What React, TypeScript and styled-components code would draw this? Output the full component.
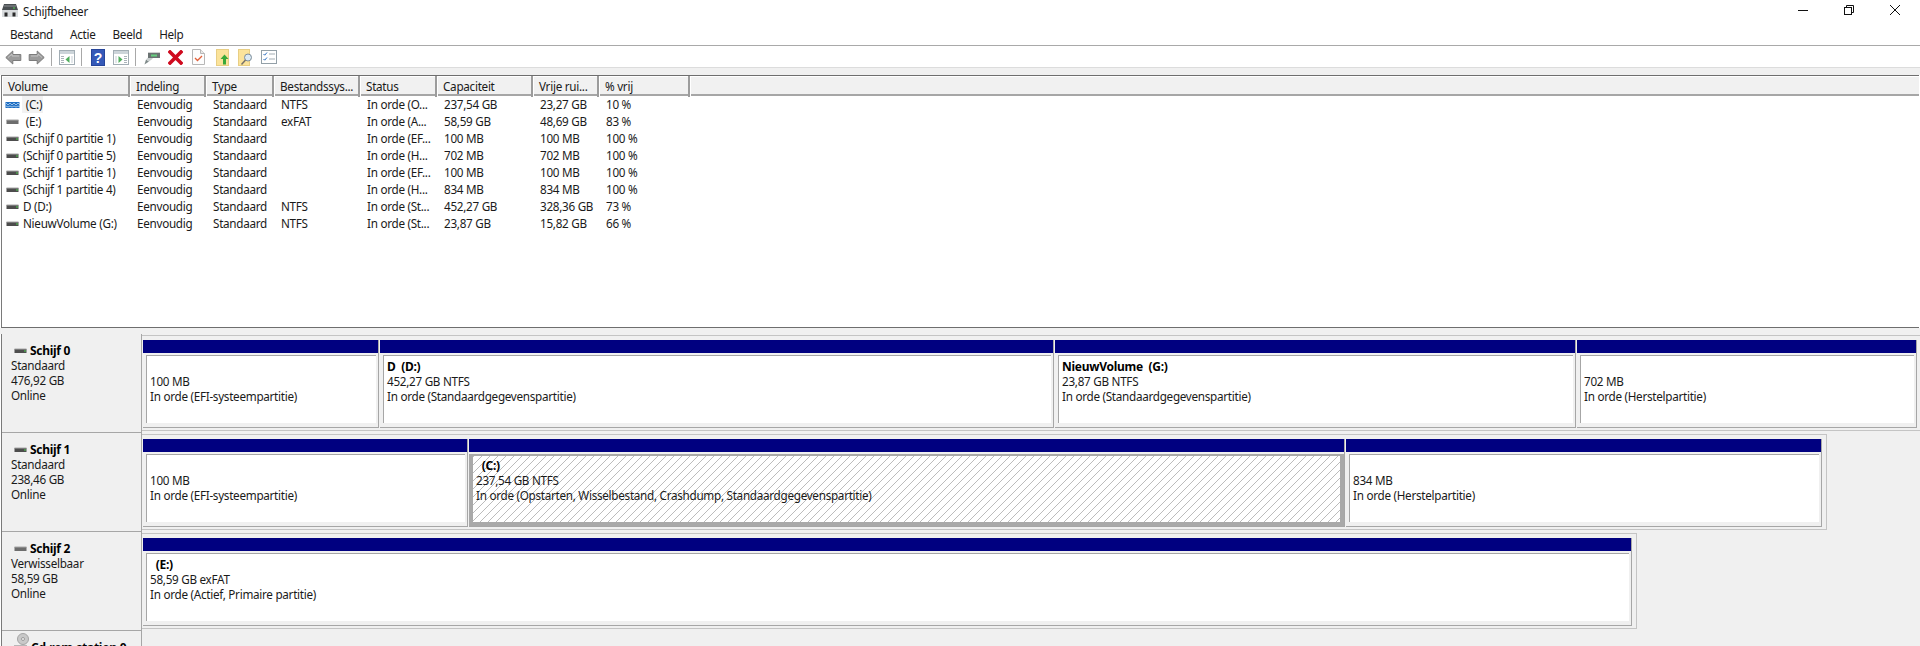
import React from 'react';
import styled, { createGlobalStyle } from 'styled-components';

const GlobalStyle = createGlobalStyle`
  html, body {
    margin: 0;
    padding: 0;
    background: #ffffff;
  }
  body {
    font-family: 'Noto Sans', 'Open Sans', sans-serif;
    font-size: 11.7px;
    letter-spacing: -0.28px;
    color: #1a1a1a;
  }
`;

const Page = styled.div`
  height: 100vh;
  overflow: hidden;
  display: flex;
  flex-direction: column;
  background: #ffffff;
`;

const TitleBar = styled.div`
  height: 24px;
  flex: none;
  display: flex;
  align-items: flex-start;
  padding-left: 2px;
`;

const TitleIcon = styled.svg`
  width: 16px;
  height: 15px;
  margin-top: 4px;
`;

const TitleText = styled.span`
  margin-left: 5px;
  line-height: 23px;
`;

const WindowControls = styled.div`
  margin-left: auto;
  padding-right: 2px;
  display: flex;
`;

const WindowButton = styled.div`
  width: 46px;
  height: 20px;
  display: flex;
  align-items: center;
  justify-content: center;
`;

const MenuBar = styled.div`
  height: 21px;
  flex: none;
  display: flex;
  padding-left: 3px;
  border-bottom: 1px solid #a9a9a9;
`;

const MenuItem = styled.span`
  line-height: 21px;
  padding: 0 7px;
  margin-right: 3px;
`;

const Toolbar = styled.div`
  height: 22px;
  flex: none;
  box-sizing: border-box;
  display: flex;
  align-items: center;
  padding: 1px 0 0 1.5px;
  border-bottom: 1px solid #dcdcdc;
`;

const Tool = styled.div`
  width: 23.3px;
  height: 20px;
  flex: none;
  display: flex;
  align-items: center;
  justify-content: center;
`;

const ToolSeparator = styled.div`
  width: 1px;
  height: 18px;
  flex: none;
  margin: 0 4px 0 2.5px;
  background: #a8a8a8;
`;

const Gap = styled.div`
  height: 7px;
  flex: none;
  background: #f0f0f0;
`;

const ListPane = styled.div`
  height: 251px;
  flex: none;
  margin-left: 1px;
  margin-right: 1px;
  border-top: 1px solid #6e6e6e;
  border-left: 1px solid #7a7a7a;
  border-bottom: 1px solid #6e6e6e;
  overflow: hidden;
`;

const columns = '128px 76px 68px 86px 77px 96px 66px 91px 1fr';

const HeaderRow = styled.div`
  display: grid;
  grid-template-columns: ${columns};
  height: 18px;
  background: #f1f1f1;
  border-bottom: 2px solid #a6a6a6;
`;

const HeaderCell = styled.div`
  padding-left: 6px;
  line-height: 21px;
  white-space: nowrap;
  border-right: 2px solid #9c9c9c;
  box-shadow: inset 1px 1px 0 #ffffff;
  &:last-child {
    border-right: none;
  }
`;

const Row = styled.div`
  display: grid;
  grid-template-columns: ${columns};
  height: 17px;
  line-height: 17px;
`;

const Cell = styled.div`
  padding-left: 7px;
  white-space: nowrap;
  overflow: hidden;
`;

const VolumeCell = styled.div`
  display: flex;
  align-items: center;
  padding-left: 3px;
  white-space: pre;
`;

const VolumeName = styled.span<{ $selected?: boolean }>`
  margin-left: 2px;
  padding: 0 1px;
  height: 17px;
  background: ${(p) => (p.$selected ? '#f2f2f2' : 'transparent')};
`;

const Splitter = styled.div`
  height: 6px;
  flex: none;
  background: #f0f0f0;
`;

const DiskPane = styled.div`
  flex: 1;
  min-height: 0;
  margin-left: 1px;
  border-left: 1px solid #7a7a7a;
  background: #f0f0f0;
`;

const DiskRow = styled.div`
  display: flex;
  height: 99px;
`;

const DiskLabel = styled.div`
  width: 140px;
  flex: none;
  box-sizing: border-box;
  padding: 9px 0 0 9px;
  line-height: 15px;
  border-right: 1px solid #a6a6a6;
  border-bottom: 1px solid #a6a6a6;
`;

const DiskName = styled.div`
  display: flex;
  align-items: center;
  font-size: 12px;
  font-weight: 700;
  color: #000000;
  margin-left: 2px;
  gap: 2px;
`;

const PartitionList = styled.div`
  align-self: flex-start;
  display: inline-flex;
  margin-top: 1px;
  padding: 4px 3px 2px 1px;
  background: #f0f0f0;
  border: 1px solid #c4c4c4;
  border-left: none;
`;

const Partition = styled.div<{ $w: number }>`
  width: ${(p) => p.$w - 1}px;
  height: 88px;
  flex: none;
  box-sizing: border-box;
  margin-right: 1px;
  border-right: 1px solid #a6a6a6;
  border-bottom: 1px solid #a6a6a6;
`;

const PartitionBar = styled.div`
  height: 13px;
  background: #000080;
`;

const PartitionBody = styled.div`
  height: 68px;
  box-sizing: border-box;
  margin: 2px 2px 0 3px;
  padding: 3px 0 0 3px;
  line-height: 15px;
  background: #ffffff;
  border-top: 1px solid #a6a6a6;
  border-left: 1px solid #a6a6a6;
`;

const SelectedBody = styled.div`
  height: 72px;
  box-sizing: border-box;
  margin-top: 2px;
  padding: 2px 0 0 3px;
  line-height: 15px;
  border: 4px solid #a9a9a9;
  border-top-width: 2px;
  background: repeating-linear-gradient(135deg, #bcbcbc 0 1px, #ffffff 1px 5.66px);
`;

const PartitionName = styled.div`
  min-height: 15px;
  font-size: 12px;
  font-weight: 700;
  color: #000000;
  white-space: pre;
`;

const PartitionText = styled.div`
  white-space: nowrap;
`;

// --- drawings ---

const Drive = ({ kind }: { kind: 'system' | 'plain' | 'removable' }) => (
  <svg width="15" height="8" viewBox="0 0 15 8" style={{ flex: 'none' }}>
    {kind === 'system' ? (
      <>
        <rect x="0.5" y="1" width="14" height="6" fill="#1f6fc4" />
        <path d="M1 2l2 2 2-2 2 2 2-2 2 2 2-2 2 2M1 5l2 1 2-1 2 1 2-1 2 1 2-1 2 1" stroke="#cfe4f7" strokeWidth="0.7" fill="none" />
      </>
    ) : (
      <>
        <rect x="1.5" y="2" width="12" height="4" fill={kind === 'plain' ? '#4d4d4d' : '#6d6d6d'} />
        <rect x="1.5" y="1.5" width="12" height="1" fill="#a8a8a8" />
        {kind === 'plain' && <rect x="11" y="3.5" width="2" height="1" fill="#4fd04f" />}
      </>
    )}
  </svg>
);

const WindowIcon = ({ arrow }: { arrow: 'left' | 'right' }) => (
  <svg width="16" height="15" viewBox="0 0 16 15">
    <rect x="0.5" y="0.5" width="15" height="14" fill="#ffffff" stroke="#a2adb4" />
    <rect x="1" y="1" width="14" height="3" fill="#ccd4d9" />
    {arrow === 'left' ? (
      <>
        <path d="M2 6.500h3M2 8.500h3M2 10.500h3M2 12.500h3" stroke="#aab3b9" />
        <path d="M10.500 6v7l-4-3.500z" fill="#4fae5c" />
        <path d="M12 6h2v7h-2z" fill="#e3e7ea" />
      </>
    ) : (
      <>
        <path d="M11 6.500h3M11 8.500h3M11 10.500h3M11 12.500h3" stroke="#aab3b9" />
        <path d="M5.500 6v7l4-3.500z" fill="#4fae5c" />
        <path d="M2 6h2v7H2z" fill="#e3e7ea" />
      </>
    )}
  </svg>
);

const ArrowIcon = ({ flip }: { flip?: boolean }) => (
  <svg width="17" height="15" viewBox="0 0 17 15" style={flip ? { transform: 'scaleX(-1)' } : undefined}>
    <path d="M0.800 7.500L7.800 1v3.500h8v6h-8V14z" fill="#9b9b9b" stroke="#7b7b7b" />
    <path d="M3 7.500L7 4v2h7" fill="none" stroke="#c4c4c4" />
  </svg>
);

const ToolIcons = {
  help: (
    <svg width="14" height="17" viewBox="0 0 14 17">
      <rect width="14" height="17" fill="#3559b8" />
      <rect x="0.500" y="0.500" width="13" height="16" fill="none" stroke="#27459a" />
      <text x="7" y="13.500" textAnchor="middle" fontSize="14" fontWeight="700" fontFamily="'Liberation Sans', sans-serif" fill="#ffffff">?</text>
    </svg>
  ),
  connect: (
    <svg width="16" height="15" viewBox="0 0 16 15">
      <path d="M0.500 14.500l1.500-5 3 2z" fill="#7f8a8a" />
      <path d="M2 9.500l3-3 4 2-4 3z" fill="#c9cfcf" />
      <rect x="4" y="3" width="12" height="5" fill="#6a7272" />
      <rect x="4" y="2" width="12" height="1" fill="#d0d0d0" />
      <rect x="7" y="4.500" width="6" height="2" fill="#66d07f" />
    </svg>
  ),
  remove: (
    <svg width="15" height="15" viewBox="0 0 15 15">
      <path d="M2 2l11 11M13 2L2 13" stroke="#cf0a1e" strokeWidth="3.600" strokeLinecap="square" />
    </svg>
  ),
  check: (
    <svg width="13" height="16" viewBox="0 0 13 16">
      <path d="M0.500 0.500h8l4 4v11h-12z" fill="#fdfdfd" stroke="#b7b7b7" />
      <path d="M8.500 0.500v4h4" fill="#e8e8e8" stroke="#b7b7b7" />
      <path d="M3 9l2.500 2.500L10 7" fill="none" stroke="#e2603a" strokeWidth="1.300" />
    </svg>
  ),
  folderUp: (
    <svg width="13" height="17" viewBox="0 0 13 17">
      <rect width="12" height="16" x="0.500" y="0.500" fill="#fbe39a" stroke="#e8ce84" />
      <path d="M8.500 5.500l4 4.500h-2.500v5.500h-3V10H4.500z" fill="#39a93a" />
    </svg>
  ),
  folderSearch: (
    <svg width="15" height="17" viewBox="0 0 15 17">
      <rect width="11" height="16" x="0.500" y="0.500" fill="#fbe39a" stroke="#e8ce84" />
      <circle cx="10" cy="8.500" r="3.500" fill="#dbe9f3" stroke="#7d8e9a" />
      <path d="M7.500 11l-4 4.500" stroke="#77726a" strokeWidth="1.500" />
    </svg>
  ),
  list: (
    <svg width="16" height="14" viewBox="0 0 16 14">
      <rect x="0.500" y="0.500" width="15" height="13" fill="#ffffff" stroke="#93a0a8" />
      <path d="M2.500 4l1.200 1.200L6 2.500M2.500 9l1.200 1.200L6 7.500" fill="none" stroke="#2d6fc0" />
      <path d="M8 4h6M8 9h6" stroke="#a3adb3" />
    </svg>
  ),
};

const CdIcon = () => (
  <svg width="16" height="17" viewBox="0 0 16 17" style={{ flex: 'none', marginTop: -12 }}>
    <circle cx="10" cy="6" r="5.500" fill="#c9c9c9" stroke="#a5a5a5" />
    <circle cx="10" cy="6" r="1.500" fill="#f3f3f3" stroke="#9c9c9c" />
    <path d="M1 12h13v5H1z" fill="#b8b8b8" />
  </svg>
);

const volumes = [
  { name: ' (C:)', drive: 'system', fs: 'NTFS', status: 'In orde (O...', cap: '237,54 GB', free: '23,27 GB', pct: '10 %', selected: true },
  { name: ' (E:)', drive: 'removable', fs: 'exFAT', status: 'In orde (A...', cap: '58,59 GB', free: '48,69 GB', pct: '83 %' },
  { name: '(Schijf 0 partitie 1)', drive: 'plain', fs: '', status: 'In orde (EF...', cap: '100 MB', free: '100 MB', pct: '100 %' },
  { name: '(Schijf 0 partitie 5)', drive: 'plain', fs: '', status: 'In orde (H...', cap: '702 MB', free: '702 MB', pct: '100 %' },
  { name: '(Schijf 1 partitie 1)', drive: 'plain', fs: '', status: 'In orde (EF...', cap: '100 MB', free: '100 MB', pct: '100 %' },
  { name: '(Schijf 1 partitie 4)', drive: 'plain', fs: '', status: 'In orde (H...', cap: '834 MB', free: '834 MB', pct: '100 %' },
  { name: 'D (D:)', drive: 'plain', fs: 'NTFS', status: 'In orde (St...', cap: '452,27 GB', free: '328,36 GB', pct: '73 %' },
  { name: 'NieuwVolume (G:)', drive: 'plain', fs: 'NTFS', status: 'In orde (St...', cap: '23,87 GB', free: '15,82 GB', pct: '66 %' },
] as const;

const headers = ['Volume', 'Indeling', 'Type', 'Bestandssys...', 'Status', 'Capaciteit', 'Vrije rui...', '% vrij', ''];

type Part = { w: number; name?: string; size: string; status: string; selected?: boolean };

const disks: { name: string; kind: string; size: string; drive: 'plain' | 'removable'; parts: Part[] }[] = [
  {
    name: 'Schijf 0',
    kind: 'Standaard',
    size: '476,92 GB',
    drive: 'plain',
    parts: [
      { w: 237, size: '100 MB', status: 'In orde (EFI-systeempartitie)' },
      { w: 675, name: 'D  (D:)', size: '452,27 GB NTFS', status: 'In orde (Standaardgegevenspartitie)' },
      { w: 522, name: 'NieuwVolume  (G:)', size: '23,87 GB NTFS', status: 'In orde (Standaardgegevenspartitie)' },
      { w: 341, size: '702 MB', status: 'In orde (Herstelpartitie)' },
    ],
  },
  {
    name: 'Schijf 1',
    kind: 'Standaard',
    size: '238,46 GB',
    drive: 'plain',
    parts: [
      { w: 326, size: '100 MB', status: 'In orde (EFI-systeempartitie)' },
      { w: 877, name: '  (C:)', size: '237,54 GB NTFS', status: 'In orde (Opstarten, Wisselbestand, Crashdump, Standaardgegevenspartitie)', selected: true },
      { w: 477, size: '834 MB', status: 'In orde (Herstelpartitie)' },
    ],
  },
  {
    name: 'Schijf 2',
    kind: 'Verwisselbaar',
    size: '58,59 GB',
    drive: 'removable',
    parts: [{ w: 1490, name: '  (E:)', size: '58,59 GB exFAT', status: 'In orde (Actief, Primaire partitie)' }],
  },
];

const App: React.FC = () => {
  return (
    <Page>
      <GlobalStyle />
      <TitleBar>
        <TitleIcon viewBox="0 0 16 15">
          <path d="M2 0h12l2 6H0z" fill="#4a4f52" />
          <rect x="2" y="1.500" width="12" height="1" fill="#8b9094" />
          <rect x="11" y="3.500" width="2" height="1" fill="#4fd04f" />
          <rect x="0" y="6" width="16" height="7" fill="#d9dcde" />
          <rect x="2.500" y="8.500" width="3" height="4" fill="#2b2b2b" />
          <rect x="10.500" y="8.500" width="3" height="4" fill="#2b2b2b" />
        </TitleIcon>
        <TitleText>Schijfbeheer</TitleText>
        <WindowControls>
          <WindowButton>
            <svg width="10" height="10" viewBox="0 0 10 10">
              <path d="M0 5.500h10" stroke="#111111" />
            </svg>
          </WindowButton>
          <WindowButton>
            <svg width="10" height="10" viewBox="0 0 10 10">
              <rect x="0.500" y="2.500" width="7" height="7" fill="none" stroke="#111111" />
              <path d="M2.500 2.500v-2h7v7h-2" fill="none" stroke="#111111" />
            </svg>
          </WindowButton>
          <WindowButton>
            <svg width="10" height="10" viewBox="0 0 10 10">
              <path d="M0 0l10 10M10 0L0 10" stroke="#111111" />
            </svg>
          </WindowButton>
        </WindowControls>
      </TitleBar>

      <MenuBar>
        <MenuItem>Bestand</MenuItem>
        <MenuItem>Actie</MenuItem>
        <MenuItem>Beeld</MenuItem>
        <MenuItem>Help</MenuItem>
      </MenuBar>

      <Toolbar>
        <Tool><ArrowIcon /></Tool>
        <Tool><ArrowIcon flip /></Tool>
        <ToolSeparator />
        <Tool><WindowIcon arrow="left" /></Tool>
        <ToolSeparator />
        <Tool>{ToolIcons.help}</Tool>
        <Tool><WindowIcon arrow="right" /></Tool>
        <ToolSeparator />
        <Tool>{ToolIcons.connect}</Tool>
        <Tool>{ToolIcons.remove}</Tool>
        <Tool>{ToolIcons.check}</Tool>
        <Tool>{ToolIcons.folderUp}</Tool>
        <Tool>{ToolIcons.folderSearch}</Tool>
        <Tool>{ToolIcons.list}</Tool>
      </Toolbar>

      <Gap />

      <ListPane>
        <HeaderRow>
          {headers.map((h, i) => (
            <HeaderCell key={i}>{h}</HeaderCell>
          ))}
        </HeaderRow>
        {volumes.map((v) => (
          <Row key={v.name}>
            <VolumeCell>
              <Drive kind={v.drive} />
              <VolumeName $selected={'selected' in v}>{v.name}</VolumeName>
            </VolumeCell>
            <Cell>Eenvoudig</Cell>
            <Cell>Standaard</Cell>
            <Cell>{v.fs}</Cell>
            <Cell>{v.status}</Cell>
            <Cell>{v.cap}</Cell>
            <Cell>{v.free}</Cell>
            <Cell>{v.pct}</Cell>
          </Row>
        ))}
      </ListPane>

      <Splitter />

      <DiskPane>
        {disks.map((d) => (
          <DiskRow key={d.name}>
            <DiskLabel>
              <DiskName>
                <Drive kind={d.drive} />
                {d.name}
              </DiskName>
              <div>{d.kind}</div>
              <div>{d.size}</div>
              <div>Online</div>
            </DiskLabel>
            <PartitionList>
              {d.parts.map((p) => (
                <Partition key={p.status + p.w} $w={p.w}>
                  <PartitionBar />
                  {p.selected ? (
                    <SelectedBody>
                      <PartitionName>{p.name}</PartitionName>
                      <PartitionText>{p.size}</PartitionText>
                      <PartitionText>{p.status}</PartitionText>
                    </SelectedBody>
                  ) : (
                    <PartitionBody>
                      <PartitionName>{p.name}</PartitionName>
                      <PartitionText>{p.size}</PartitionText>
                      <PartitionText>{p.status}</PartitionText>
                    </PartitionBody>
                  )}
                </Partition>
              ))}
            </PartitionList>
          </DiskRow>
        ))}
        <DiskRow>
          <DiskLabel>
            <DiskName>
              <CdIcon />
              Cd-rom-station 0
            </DiskName>
          </DiskLabel>
        </DiskRow>
      </DiskPane>
    </Page>
  );
};

export default App;
